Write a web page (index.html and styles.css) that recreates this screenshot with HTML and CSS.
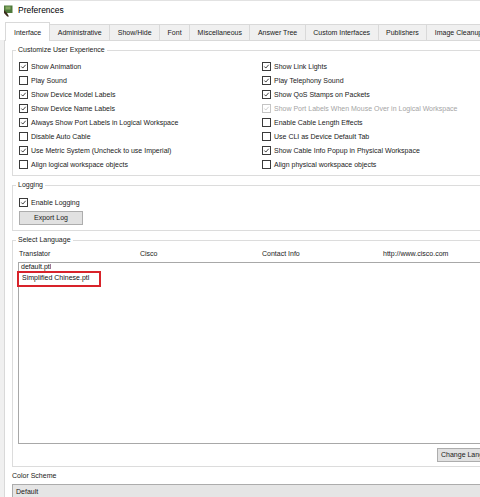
FILE: index.html
```html
<!DOCTYPE html>
<html>
<head>
<meta charset="utf-8">
<title>Preferences</title>
<link rel="stylesheet" href="styles.css">
</head>
<body>
<div class="window">
  <div class="titlebar">
    <svg class="appicon" viewBox="0 0 10 12" width="10" height="12">
      <rect x="1" y="0.5" width="8.5" height="7.5" fill="#4f7a3c"/>
      <rect x="2.5" y="1.5" width="5" height="3" fill="#86a862"/>
      <path d="M1 5 L4 8 L6 11.5 L4.2 11.5 L1 8 Z" fill="#3b2a1c"/>
    </svg>
    <span class="title">Preferences</span>
  </div>
  <div class="tabs">
    <div class="tab active">Interface</div>
    <div class="tab">Administrative</div>
    <div class="tab">Show/Hide</div>
    <div class="tab">Font</div>
    <div class="tab">Miscellaneous</div>
    <div class="tab">Answer Tree</div>
    <div class="tab">Custom Interfaces</div>
    <div class="tab">Publishers</div>
    <div class="tab">Image Cleanup</div>
  </div>
  <div class="panel">
    <fieldset class="group ux">
      <legend>Customize User Experience</legend>
      <div class="cols">
        <div class="col left">
          <div class="row"><span class="cb on"><svg viewBox="0 0 9 9"><path d="M1.7 4.5 L3.6 6.5 L7.3 2.3"/></svg></span>Show Animation</div>
          <div class="row"><span class="cb"></span>Play Sound</div>
          <div class="row"><span class="cb on"><svg viewBox="0 0 9 9"><path d="M1.7 4.5 L3.6 6.5 L7.3 2.3"/></svg></span>Show Device Model Labels</div>
          <div class="row"><span class="cb on"><svg viewBox="0 0 9 9"><path d="M1.7 4.5 L3.6 6.5 L7.3 2.3"/></svg></span>Show Device Name Labels</div>
          <div class="row"><span class="cb on"><svg viewBox="0 0 9 9"><path d="M1.7 4.5 L3.6 6.5 L7.3 2.3"/></svg></span>Always Show Port Labels in Logical Workspace</div>
          <div class="row"><span class="cb"></span>Disable Auto Cable</div>
          <div class="row"><span class="cb on"><svg viewBox="0 0 9 9"><path d="M1.7 4.5 L3.6 6.5 L7.3 2.3"/></svg></span>Use Metric System (Uncheck to use Imperial)</div>
          <div class="row"><span class="cb"></span>Align logical workspace objects</div>
        </div>
        <div class="col right">
          <div class="row"><span class="cb on"><svg viewBox="0 0 9 9"><path d="M1.7 4.5 L3.6 6.5 L7.3 2.3"/></svg></span>Show Link Lights</div>
          <div class="row"><span class="cb on"><svg viewBox="0 0 9 9"><path d="M1.7 4.5 L3.6 6.5 L7.3 2.3"/></svg></span>Play Telephony Sound</div>
          <div class="row"><span class="cb on"><svg viewBox="0 0 9 9"><path d="M1.7 4.5 L3.6 6.5 L7.3 2.3"/></svg></span>Show QoS Stamps on Packets</div>
          <div class="row disabled"><span class="cb on"><svg viewBox="0 0 9 9"><path d="M1.7 4.5 L3.6 6.5 L7.3 2.3"/></svg></span>Show Port Labels When Mouse Over in Logical Workspace</div>
          <div class="row"><span class="cb"></span>Enable Cable Length Effects</div>
          <div class="row"><span class="cb"></span>Use CLI as Device Default Tab</div>
          <div class="row"><span class="cb on"><svg viewBox="0 0 9 9"><path d="M1.7 4.5 L3.6 6.5 L7.3 2.3"/></svg></span>Show Cable Info Popup in Physical Workspace</div>
          <div class="row"><span class="cb"></span>Align physical workspace objects</div>
        </div>
      </div>
    </fieldset>

    <fieldset class="group logging">
      <legend>Logging</legend>
      <div class="row"><span class="cb on"><svg viewBox="0 0 9 9"><path d="M1.7 4.5 L3.6 6.5 L7.3 2.3"/></svg></span>Enable Logging</div>
      <div class="btn export">Export Log</div>
    </fieldset>

    <fieldset class="group language">
      <legend>Select Language</legend>
      <div class="info">
        <span>Translator</span>
        <span>Cisco</span>
        <span>Contact Info</span>
        <span>http://www.cisco.com</span>
      </div>
      <div class="list">
        <div class="item first">default.ptl</div>
        <div class="item marked">Simplified Chinese.ptl<span class="highlight"></span></div>
      </div>
      <div class="btnrow"><div class="btn change">Change Language</div></div>
    </fieldset>

    <div class="scheme-label">Color Scheme</div>
    <div class="select">Default</div>
  </div>
</div>
</body>
</html>
```

FILE: styles.css
```css
html, body {
  margin: 0;
  padding: 0;
  width: 480px;
  height: 497px;
  overflow: hidden;
}

body {
  font-family: "Liberation Sans", Arial, sans-serif;
  font-size: 7px;
  color: #1a1a1a;
  background: #f0f0f0;
}

.window {
  width: 620px;
  height: 497px;
  background: #f0f0f0;
}

.titlebar {
  height: 19px;
  display: flex;
  align-items: center;
  background: #ffffff;
  border-top: 1px solid #e2e2e2;
  box-sizing: border-box;
  padding-left: 3px;
}

.appicon {
  display: block;
  margin-right: 5px;
  margin-top: 2px;
}

.title {
  font-size: 8.5px;
  color: #000;
}

.tabs {
  height: 21px;
  display: flex;
  align-items: flex-end;
  padding-left: 5px;
  background: #ffffff;
  box-sizing: border-box;
}

.tab {
  height: 16px;
  line-height: 15px;
  padding: 0 7.5px;
  background: #f0f0f0;
  border: 1px solid #d9d9d9;
  border-bottom: none;
  margin-left: -1px;
  box-sizing: border-box;
  white-space: nowrap;
  flex: none;
}

.tab.active {
  height: 19px;
  line-height: 20px;
  margin-left: 0;
  margin-bottom: -1px;
  background: #ffffff;
  position: relative;
  z-index: 1;
  padding: 0 8px;
}

.panel {
  margin-left: 4px;
  background: #ffffff;
  border-top: 1px solid #d9d9d9;
  border-left: 1px solid #d9d9d9;
  padding: 4px 0 0 7px;
  height: 460px;
}

.group {
  margin: 0;
  border: 1px solid #dcdcdc;
  padding: 0 6px;
  min-width: 0;
}

.group legend {
  font-size: 7px;
  line-height: 10px;
  padding: 0 2px;
  margin-left: -3px;
}

.ux {
  padding-top: 4px;
  padding-bottom: 4px;
}

.cols {
  display: flex;
}

.col.left {
  width: 243px;
}

.row {
  height: 14px;
  display: flex;
  align-items: center;
  white-space: nowrap;
}

.cb {
  width: 9px;
  height: 9px;
  box-sizing: border-box;
  border: 1px solid #3a3a3a;
  background: #fff;
  margin-right: 3px;
  flex: none;
  display: flex;
}

.cb svg {
  width: 7px;
  height: 7px;
  fill: none;
  stroke: #222;
  stroke-width: 1.1;
}

.row.disabled {
  color: #a5a5a5;
}

.row.disabled .cb {
  border-color: #c4c4c4;
}

.row.disabled .cb svg {
  stroke: #c4c4c4;
}

.logging {
  margin-top: 4px;
  padding-top: 5px;
  padding-bottom: 5px;
}

.btn {
  height: 14px;
  line-height: 12px;
  box-sizing: border-box;
  background: #e1e1e1;
  border: 1px solid #adadad;
  text-align: center;
  white-space: nowrap;
}

.export {
  width: 64px;
  margin-top: 2px;
}

.language {
  margin-top: 4px;
  padding-top: 4px;
  padding-bottom: 4px;
}

.info {
  display: grid;
  grid-template-columns: 121px 122px 121px auto;
  height: 10px;
  line-height: 10px;
}

.list {
  margin-top: 3px;
  margin-left: -1px;
  height: 182px;
  box-sizing: border-box;
  border: 1px solid #a8a8a8;
  border-right: none;
  background: #fff;
}

.item {
  height: 10px;
  line-height: 10px;
  padding-left: 2px;
  width: max-content;
  color: #111;
}

.item.first {
  line-height: 8px;
  overflow: hidden;
}

.item.marked {
  position: relative;
  padding-left: 3px;
}

.highlight {
  position: absolute;
  left: -2px;
  top: -2px;
  width: 84px;
  height: 16px;
  box-sizing: border-box;
  border: 2px solid #d8232a;
}

.btnrow {
  display: flex;
  margin-top: 4px;
}

.change {
  margin-left: 418px;
  padding: 0 3px;
  text-align: left;
}

.scheme-label {
  height: 10px;
  line-height: 10px;
  margin-top: 4px;
}

.select {
  margin-top: 3px;
  height: 16px;
  line-height: 13px;
  box-sizing: border-box;
  background: #e5e5e5;
  border: 1px solid #acacac;
  padding-left: 3px;
}
```
